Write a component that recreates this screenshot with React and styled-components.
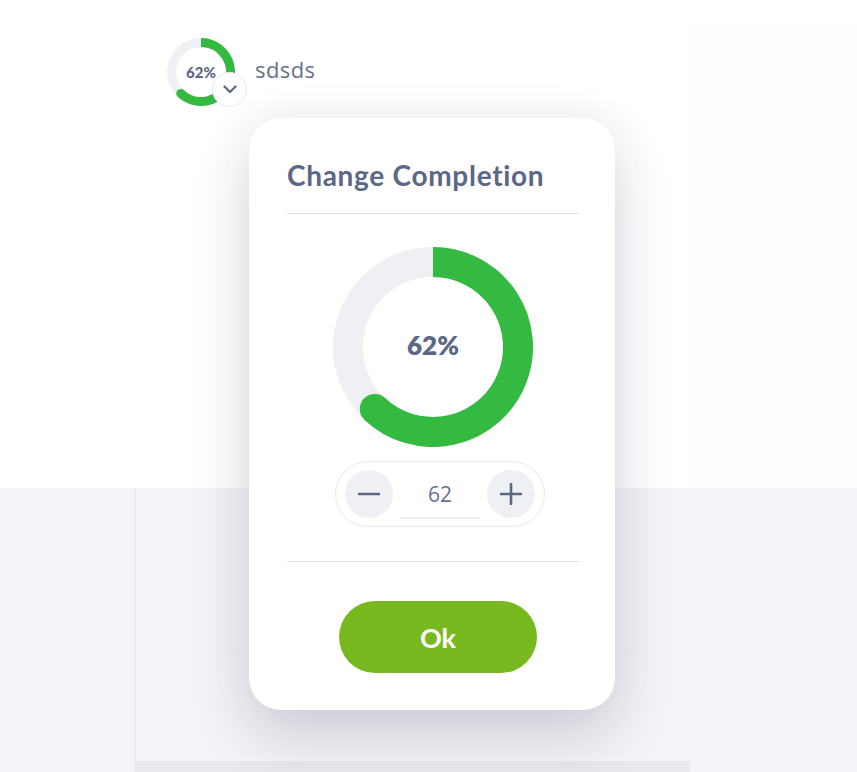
import React from "react";
import styled, { createGlobalStyle } from "styled-components";

const GlobalStyle = createGlobalStyle`
  html, body { margin: 0; padding: 0; background: #ffffff; }
  body { font-family: "Nunito", "Lato", "Open Sans", sans-serif; }
  * { box-sizing: border-box; }
`;

const Page = styled.div`
  position: relative;
  width: 857px;
  height: 772px;
  overflow: hidden;
  display: grid;
  grid-template-rows: 488px 1fr;
`;

const Top = styled.div`
  background: #ffffff;
  display: grid;
  grid-template-columns: 690px 1fr;
`;

const TopMain = styled.div`
  padding: 38px 0 0 167px;
`;

const TopSide = styled.div`
  margin-top: 20px;
  background: #fefefe;
`;

const TaskRow = styled.div`
  display: flex;
  align-items: center;
  gap: 20px;
`;

const Mini = styled.div`
  position: relative;
  width: 68px;
  height: 68px;
  flex: none;
`;

const MiniLabel = styled.span`
  position: absolute;
  inset: 0;
  display: flex;
  align-items: center;
  justify-content: center;
  font-family: "Lato", sans-serif;
  font-weight: 900;
  font-size: 15px;
  color: #5a6785;
`;

const ChevronBadge = styled.span`
  position: absolute;
  left: 45px;
  top: 34px;
  width: 35px;
  height: 35px;
  border-radius: 50%;
  background: #ffffff;
  border: 1px solid #e6e8ef;
  display: flex;
  align-items: center;
  justify-content: center;
`;

const TaskName = styled.span`
  font-family: "Open Sans", sans-serif;
  font-size: 22px;
  letter-spacing: 0.4px;
  color: #66728e;
  margin-top: -6px;
`;

const Bottom = styled.div`
  background: #f3f3f8;
  display: grid;
  grid-template-columns: 136px 554px 1fr;
`;

const LeftCol = styled.div`
  border-right: 1px solid #e6e6ed;
`;

const Panel = styled.div`
  display: flex;
  flex-direction: column;
  justify-content: flex-end;
`;

const PanelBand = styled.div`
  height: 11px;
  background: #e9e9ef;
`;

const Modal = styled.div`
  position: absolute;
  left: 249px;
  top: 118px;
  width: 366px;
  height: 592px;
  background: #ffffff;
  border-radius: 32px;
  box-shadow: 0 28px 60px rgba(40, 40, 70, 0.16), 0 0 50px rgba(40, 40, 70, 0.05);
  padding: 38px 36px 0 38px;
  display: flex;
  flex-direction: column;
`;

const Title = styled.h2`
  margin: 0;
  font-family: "Lato", sans-serif;
  font-weight: 700;
  font-size: 28px;
  line-height: 38px;
  color: #5a6785;
  letter-spacing: 0.7px;
`;

const Divider = styled.hr`
  margin: ${(p) => p.$mt}px 0 0 0;
  border: none;
  height: 1px;
  background: #dfe2ea;
`;

const DonutWrap = styled.div`
  position: relative;
  align-self: center;
  margin: 33px 0 0 0;
  width: 200px;
  height: 200px;
`;

const DonutLabel = styled.span`
  position: absolute;
  inset: 0 0 4px 0;
  display: flex;
  align-items: center;
  justify-content: center;
  font-family: "Lato", sans-serif;
  font-weight: 800;
  font-size: 26px;
  color: #5a6785;
`;

const Stepper = styled.div`
  align-self: center;
  margin: 14px 0 0 14px;
  width: 210px;
  height: 66px;
  border: 1px solid #e8e9ef;
  border-radius: 33px;
  display: flex;
  align-items: center;
  justify-content: space-between;
  padding: 0 9px;
`;

const StepButton = styled.button`
  width: 48px;
  height: 48px;
  border-radius: 50%;
  border: none;
  background: #eef0f4;
  display: flex;
  align-items: center;
  justify-content: center;
  padding: 0;
  cursor: pointer;
`;

const StepValue = styled.div`
  width: 80px;
  height: 44px;
  margin-top: 6px;
  border-bottom: 2px solid #eeeff5;
  display: flex;
  align-items: center;
  justify-content: center;
  padding-bottom: 4px;
  font-family: "Open Sans", sans-serif;
  font-size: 21px;
  color: #66728e;
`;

const OkButton = styled.button`
  align-self: center;
  margin: 39px 0 0 10px;
  width: 198px;
  height: 72px;
  border: none;
  border-radius: 36px;
  background: #78b920;
  color: #ffffff;
  font-family: "Lato", sans-serif;
  font-weight: 700;
  font-size: 27px;
  cursor: pointer;
`;

function Ring({ size, stroke, pct, track, color }) {
  const c = size / 2;
  const r = c - stroke / 2;
  const a = (pct / 100) * 2 * Math.PI;
  const ex = c + r * Math.sin(a);
  const ey = c - r * Math.cos(a);
  const large = pct > 50 ? 1 : 0;
  return (
    <svg width={size} height={size} viewBox={`0 0 ${size} ${size}`}>
      <circle cx={c} cy={c} r={r} fill="none" stroke={track} strokeWidth={stroke} />
      <path
        d={`M ${c} ${c - r} A ${r} ${r} 0 ${large} 1 ${ex} ${ey}`}
        fill="none"
        stroke={color}
        strokeWidth={stroke}
      />
      <circle cx={ex} cy={ey} r={stroke / 2} fill={color} />
    </svg>
  );
}

export default function App() {
  const pct = 62;
  return (
    <>
      <GlobalStyle />
      <Page>
        <Top>
          <TopMain>
            <TaskRow>
              <Mini>
                <Ring size={68} stroke={9} pct={pct} track="#eff0f4" color="#34b941" />
                <MiniLabel>{pct}%</MiniLabel>
                <ChevronBadge>
                  <svg width="14" height="9" viewBox="0 0 14 9">
                    <path d="M1.5 1.5 L7 7 L12.5 1.5" fill="none" stroke="#5a6785" strokeWidth="2.2" strokeLinecap="round" strokeLinejoin="round" />
                  </svg>
                </ChevronBadge>
              </Mini>
              <TaskName>sdsds</TaskName>
            </TaskRow>
          </TopMain>
          <TopSide />
        </Top>
        <Bottom>
          <LeftCol />
          <Panel>
            <PanelBand />
          </Panel>
          <div />
        </Bottom>
        <Modal>
          <Title>Change Completion</Title>
          <Divider $mt={19} />
          <DonutWrap>
            <Ring size={200} stroke={30} pct={pct} track="#eff0f4" color="#34b941" />
            <DonutLabel>{pct}%</DonutLabel>
          </DonutWrap>
          <Stepper>
            <StepButton aria-label="decrease">
              <svg width="22" height="22" viewBox="0 0 22 22">
                <path d="M1 11 H21" stroke="#5a6785" strokeWidth="2.6" strokeLinecap="round" />
              </svg>
            </StepButton>
            <StepValue>{pct}</StepValue>
            <StepButton aria-label="increase">
              <svg width="22" height="22" viewBox="0 0 22 22">
                <path d="M1 11 H21 M11 1 V21" stroke="#5a6785" strokeWidth="2.6" strokeLinecap="round" />
              </svg>
            </StepButton>
          </Stepper>
          <Divider $mt={34} />
          <OkButton>Ok</OkButton>
        </Modal>
      </Page>
    </>
  );
}
